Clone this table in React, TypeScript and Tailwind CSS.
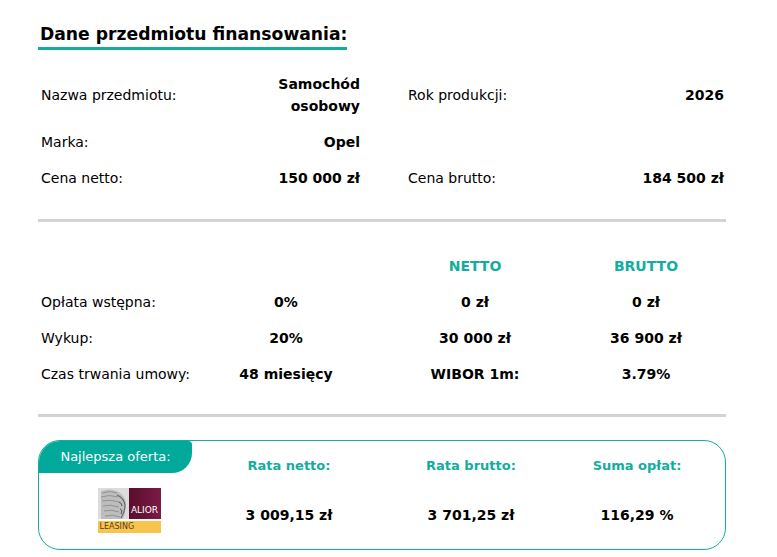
const teal = 'text-[#12ad9f]';

const AliorLogo = () => (
  <div className="w-[63px] flex flex-col gap-[2px]">
    <div className="flex h-[31px]">
      <svg width="31" height="31" viewBox="0 0 31 31" className="block">
        <rect width="31" height="31" fill="#dcdcdc" />
        <path d="M3 3 Q11 0 19 3 Q27 7 28 15 Q28 23 25 31 L3 31 Z" fill="#bdbdbd" />
        <path d="M4 5 Q12 2 19 5 M3 9 Q11 6 20 9 M4 13 Q12 11 21 14 M5 18 Q12 16 21 19 M6 23 Q13 21 21 24 M7 28 Q14 26 22 29" stroke="#8c8c8c" strokeWidth="0.9" fill="none" />
        <path d="M19 7 Q26 10 27 17 Q27 24 23 30" stroke="#6b6b6b" strokeWidth="1.2" fill="none" />
        <path d="M21 14 Q24 15 24 18 M22 21 Q25 22 23 26" stroke="#505050" strokeWidth="1" fill="none" />
      </svg>
      <div className="flex-1 bg-gradient-to-r from-[#5a0d2b] to-[#7b1b47] flex items-end justify-center pb-[4px]">
        <span className="text-white text-[9px] leading-none" style={{ fontFamily: '"DejaVu Sans", sans-serif' }}>
          ALIOR
        </span>
      </div>
    </div>
    <div className="h-[12px] bg-[#f7c54e] flex items-center pl-[2px]">
      <span className="text-[#5e3a18] text-[8px] leading-none" style={{ fontFamily: '"DejaVu Sans", sans-serif' }}>
        LEASING
      </span>
    </div>
  </div>
);

const Divider = () => <div className="h-[3px] bg-[#d3d3d3]" />;

const cols = 'grid grid-cols-[193px_126px_48px_160px_156px] items-center leading-[22px] pl-[3px]';

export default function App() {
  return (
    <div className="bg-white w-[777px] h-[557px] text-black text-[14px]" style={{ fontFamily: '"DejaVu Sans", Verdana, sans-serif' }}>
      <div className="w-[688px] ml-[38px] pt-[23px]">
        <h2 className="inline-block text-[17.2px] font-bold leading-[22px] pl-[2px] border-b-[3px] border-[#12ad9f] pb-[2px]">
          Dane przedmiotu finansowania:
        </h2>

        {/* dane pojazdu */}
        <div className="pt-[23px] pb-[30px] flex flex-col gap-[14px]">
          <div className={cols}>
            <span>Nazwa przedmiotu:</span>
            <span className="font-bold text-right">Samochód osobowy</span>
            <span />
            <span>Rok produkcji:</span>
            <span className="font-bold text-right">2026</span>
          </div>
          <div className={cols}>
            <span>Marka:</span>
            <span className="font-bold text-right">Opel</span>
          </div>
          <div className={cols}>
            <span>Cena netto:</span>
            <span className="font-bold text-right">150 000 zł</span>
            <span />
            <span>Cena brutto:</span>
            <span className="font-bold text-right">184 500 zł</span>
          </div>
        </div>

        <Divider />

        {/* warunki */}
        <div className="pt-[26px] pb-[22px] flex flex-col">
          {[
            ['', '', 'NETTO', 'BRUTTO'],
            ['Opłata wstępna:', '0%', '0 zł', '0 zł'],
            ['Wykup:', '20%', '30 000 zł', '36 900 zł'],
            ['Czas trwania umowy:', '48 miesięcy', 'WIBOR 1m:', '3.79%'],
          ].map((row, i) => (
            <div key={i} className="grid grid-cols-[162px_172px_206px_136px] h-[36px] items-center">
              <span className="pl-[3px]">{row[0]}</span>
              <span className="font-bold text-center">{row[1]}</span>
              <span className={i === 0 ? `font-bold text-center ${teal}` : 'font-bold text-center'}>{row[2]}</span>
              <span className={i === 0 ? `font-bold text-center ${teal}` : 'font-bold text-center'}>{row[3]}</span>
            </div>
          ))}
        </div>

        <Divider />

        {/* najlepsza oferta */}
        <div className="mt-[23px] h-[110px] border-[1.5px] border-[#12ad9f] rounded-[22px] overflow-hidden">
          <div className="grid grid-cols-[176px_152px_208px_124px] h-full">
            <div className="flex flex-col">
              <div className="w-[153px] h-[32px] bg-[#00a99a] rounded-br-[20px] rounded-tr-[4px] flex items-center justify-center text-white text-[13px]">
                Najlepsza oferta:
              </div>
              <div className="flex-1 flex items-start justify-center pt-[15px] pl-[4px]">
                <AliorLogo />
              </div>
            </div>
            {[
              ['Rata netto:', '3 009,15 zł'],
              ['Rata brutto:', '3 701,25 zł'],
              ['Suma opłat:', '116,29 %'],
            ].map(([h, v], i) => (
              <div key={h} className={i === 0 ? 'flex flex-col items-center pt-[15px] pr-[4px]' : 'flex flex-col items-center pt-[15px]'}>
                <span className={`font-bold text-[13px] ${teal}`}>{h}</span>
                <span className="font-bold mt-[29px]">{v}</span>
              </div>
            ))}
          </div>
        </div>
      </div>
    </div>
  );
}
